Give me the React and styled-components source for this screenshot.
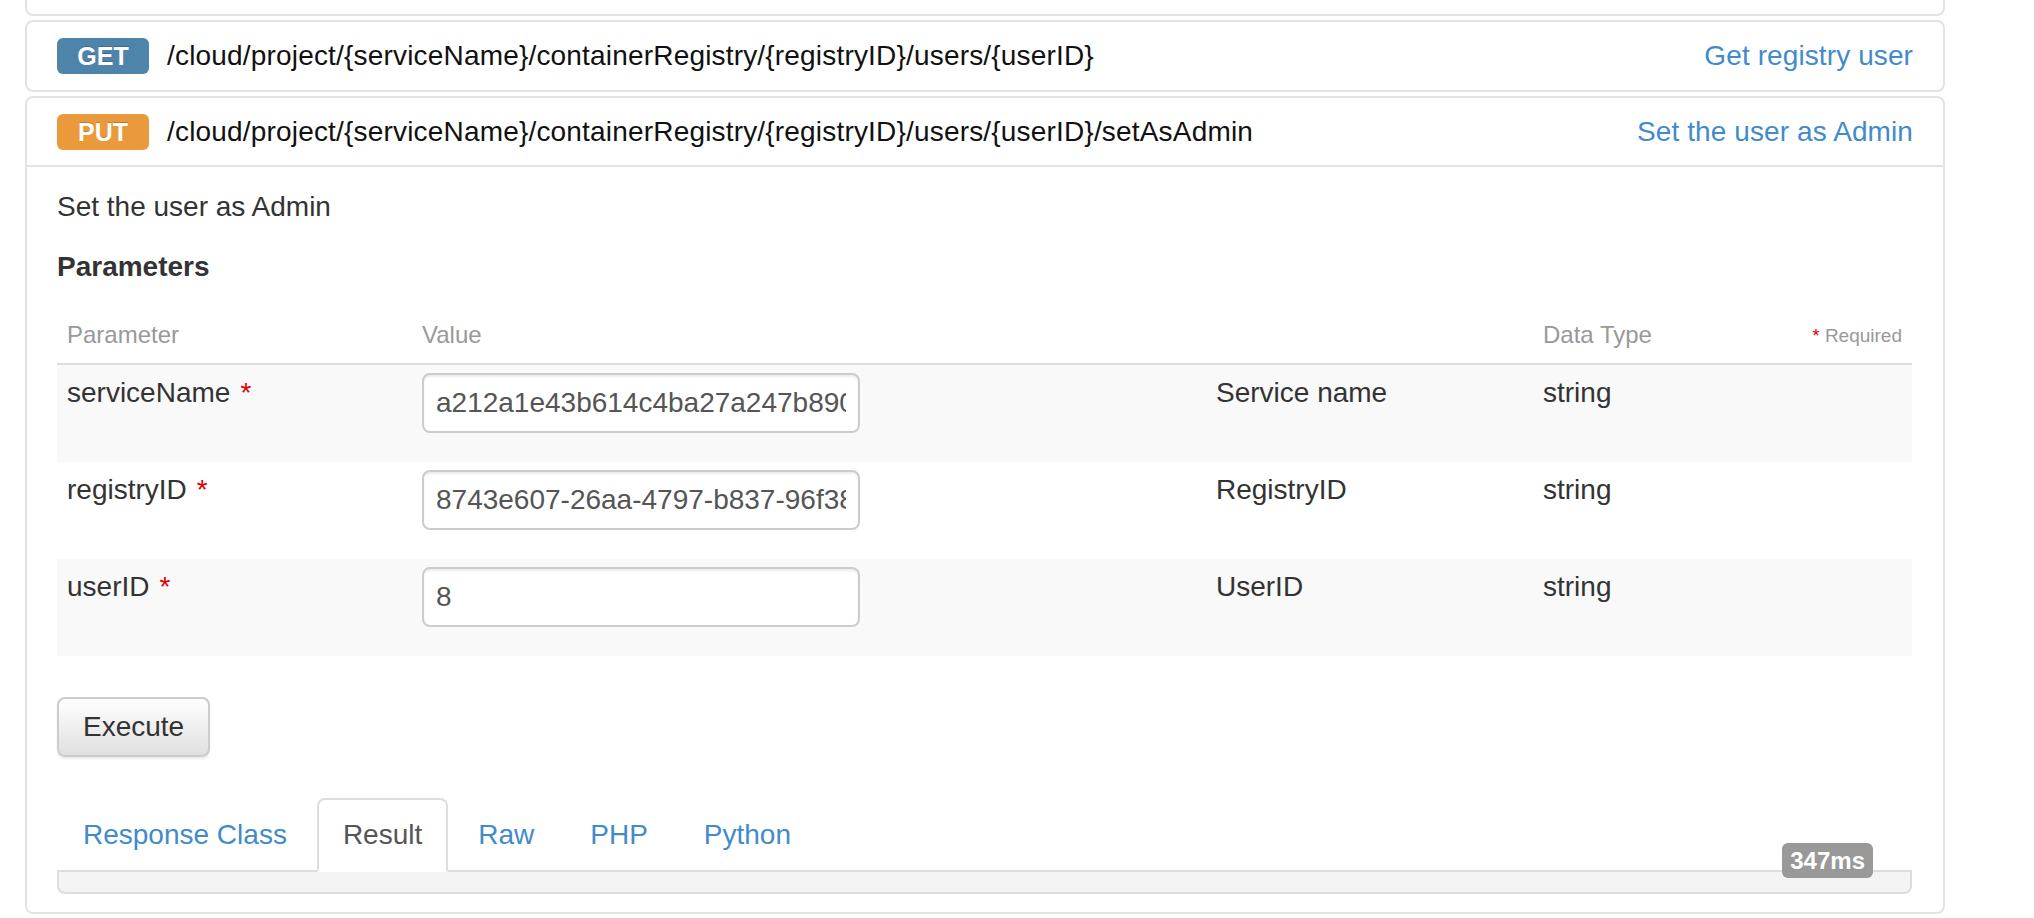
import React from "react";
import styled, { createGlobalStyle, css } from "styled-components";

const GlobalStyle = createGlobalStyle`
  * { box-sizing: border-box; }
  body {
    margin: 0;
    background: #fff;
    font-family: "Liberation Sans", Helvetica, Arial, sans-serif;
    font-size: 28px;
    line-height: 40px;
    color: #333;
  }
`;

const LINK = "#428bca";

const Page = styled.div`
  width: 1920px;
  margin-left: 25px;
`;

const Panel = styled.section`
  border: 2px solid #e3e3e3;
  border-radius: 8px;
  background: #fff;
  margin-top: 4px;
`;

// previous operation, scrolled mostly out of view
const CutPanel = styled(Panel)`
  height: 30px;
  margin-top: -14px;
`;

const Heading = styled.div`
  display: flex;
  align-items: center;
  height: 68px;
  padding: 0 30px;
  ${(p) =>
    p.$open &&
    css`
      height: 69px;
      border-bottom: 2px solid #e3e3e3;
    `}
`;

const Method = styled.span`
  width: 92px;
  height: 36px;
  margin-right: 18px;
  border-radius: 6px;
  background: ${(p) => (p.$verb === "PUT" ? "#ea9a3a" : "#4e84aa")};
  color: #fff;
  font-size: 25px;
  font-weight: bold;
  line-height: 36px;
  text-align: center;
  text-shadow: 0 -1px 0 rgba(0, 0, 0, 0.2);
`;

const Path = styled.span`
  flex: 1;
  color: #111;
  letter-spacing: 0.18px;
`;

const Summary = styled.a`
  color: ${LINK};
  text-decoration: none;
  letter-spacing: 0.1px;
`;

const Body = styled.div`
  padding: 20px 30px 18px;
`;

const Description = styled.p`
  margin: 0 0 20px;
`;

const SectionTitle = styled.h4`
  margin: 0 0 20px;
  font-size: 28px;
  line-height: 40px;
  font-weight: bold;
`;

const Table = styled.table`
  width: 1855px;
  table-layout: fixed;
  border-collapse: collapse;
`;

const Th = styled.th`
  padding: 10px;
  font-size: 24px;
  line-height: 34px;
  font-weight: normal;
  color: #999;
  text-align: ${(p) => (p.$right ? "right" : "left")};
  border-bottom: 2px solid #ddd;
`;

const Row = styled.tr`
  background: ${(p) => (p.$striped ? "#f9f9f9" : "#fff")};
  & + & td {
    border-top: 2px solid #ddd;
  }
`;

const Td = styled.td`
  padding: 8px 10px 29px;
  vertical-align: top;
  line-height: 40px;
`;

const Star = styled.span`
  color: #d00;
  margin-left: ${(p) => (p.$small ? "0" : "10px")};
`;

const Required = styled.span`
  font-size: 19px;
`;

const Input = styled.input`
  display: block;
  width: 438px;
  height: 60px;
  padding: 0 12px;
  border: 2px solid #ccc;
  border-radius: 8px;
  box-shadow: inset 0 2px 2px rgba(0, 0, 0, 0.075);
  font-family: inherit;
  font-size: 28px;
  color: #555;
  background: #fff;
  outline: none;
`;

const Button = styled.button`
  display: block;
  margin-top: 41px;
  height: 60px;
  padding: 0 24px;
  border: 2px solid #ccc;
  border-radius: 8px;
  background: linear-gradient(to bottom, #fff 0%, #e0e0e0 100%);
  box-shadow: inset 0 2px 0 rgba(255, 255, 255, 0.15),
    0 2px 2px rgba(0, 0, 0, 0.075);
  font-family: inherit;
  font-size: 28px;
  line-height: 40px;
  color: #333;
`;

const ResultArea = styled.div`
  position: relative;
  margin-top: 41px;
  width: 1855px;
`;

const TabNav = styled.ul`
  display: flex;
  margin: 0;
  padding: 0;
  list-style: none;
  border-bottom: 2px solid #ddd;
`;

const Tab = styled.li`
  margin: 0 4px -2px 0;
  padding: 15px 24px;
  line-height: 40px;
  border: 2px solid transparent;
  border-radius: 8px 8px 0 0;
  color: ${LINK};
  ${(p) =>
    p.$active &&
    css`
      color: #555;
      background: #fff;
      border-color: #ddd #ddd transparent;
    `}
`;

const TabContent = styled.div`
  height: 22px;
  background: #f4f4f4;
  border: 2px solid #ddd;
  border-top: none;
  border-radius: 0 0 8px 8px;
`;

const Timing = styled.span`
  position: absolute;
  right: 39px;
  bottom: 16px;
  height: 35px;
  padding: 0 8px;
  border-radius: 6px;
  background: #999;
  color: #fff;
  font-size: 24px;
  font-weight: bold;
  line-height: 35px;
`;

const params = [
  {
    name: "serviceName",
    value: "a212a1e43b614c4ba27a247b8903c8ab",
    description: "Service name",
  },
  {
    name: "registryID",
    value: "8743e607-26aa-4797-b837-96f38c2e1a4d",
    description: "RegistryID",
  },
  { name: "userID", value: "8", description: "UserID" },
];

const tabs = ["Response Class", "Result", "Raw", "PHP", "Python"];

export default function App() {
  return (
    <Page>
      <GlobalStyle />
      <CutPanel />
      <Panel>
        <Heading>
          <Method $verb="GET">GET</Method>
          <Path>/cloud/project/{"{serviceName}"}/containerRegistry/{"{registryID}"}/users/{"{userID}"}</Path>
          <Summary href="#">Get registry user</Summary>
        </Heading>
      </Panel>
      <Panel>
        <Heading $open>
          <Method $verb="PUT">PUT</Method>
          <Path>
            /cloud/project/{"{serviceName}"}/containerRegistry/{"{registryID}"}/users/{"{userID}"}/setAsAdmin
          </Path>
          <Summary href="#">Set the user as Admin</Summary>
        </Heading>
        <Body>
          <Description>Set the user as Admin</Description>
          <SectionTitle>Parameters</SectionTitle>
          <Table>
            <colgroup>
              <col style={{ width: 355 }} />
              <col style={{ width: 794 }} />
              <col style={{ width: 327 }} />
              <col style={{ width: 227 }} />
              <col style={{ width: 152 }} />
            </colgroup>
            <thead>
              <tr>
                <Th>Parameter</Th>
                <Th>Value</Th>
                <Th />
                <Th>Data Type</Th>
                <Th $right>
                  <Required>
                    <Star $small>*</Star> Required
                  </Required>
                </Th>
              </tr>
            </thead>
            <tbody>
              {params.map((p, i) => (
                <Row key={p.name} $striped={i % 2 === 0}>
                  <Td>
                    {p.name}
                    <Star>*</Star>
                  </Td>
                  <Td>
                    <Input defaultValue={p.value} />
                  </Td>
                  <Td>{p.description}</Td>
                  <Td>string</Td>
                  <Td />
                </Row>
              ))}
            </tbody>
          </Table>
          <Button>Execute</Button>
          <ResultArea>
            <TabNav>
              {tabs.map((t) => (
                <Tab key={t} $active={t === "Result"}>
                  {t}
                </Tab>
              ))}
            </TabNav>
            <TabContent />
            <Timing>347ms</Timing>
          </ResultArea>
        </Body>
      </Panel>
    </Page>
  );
}
